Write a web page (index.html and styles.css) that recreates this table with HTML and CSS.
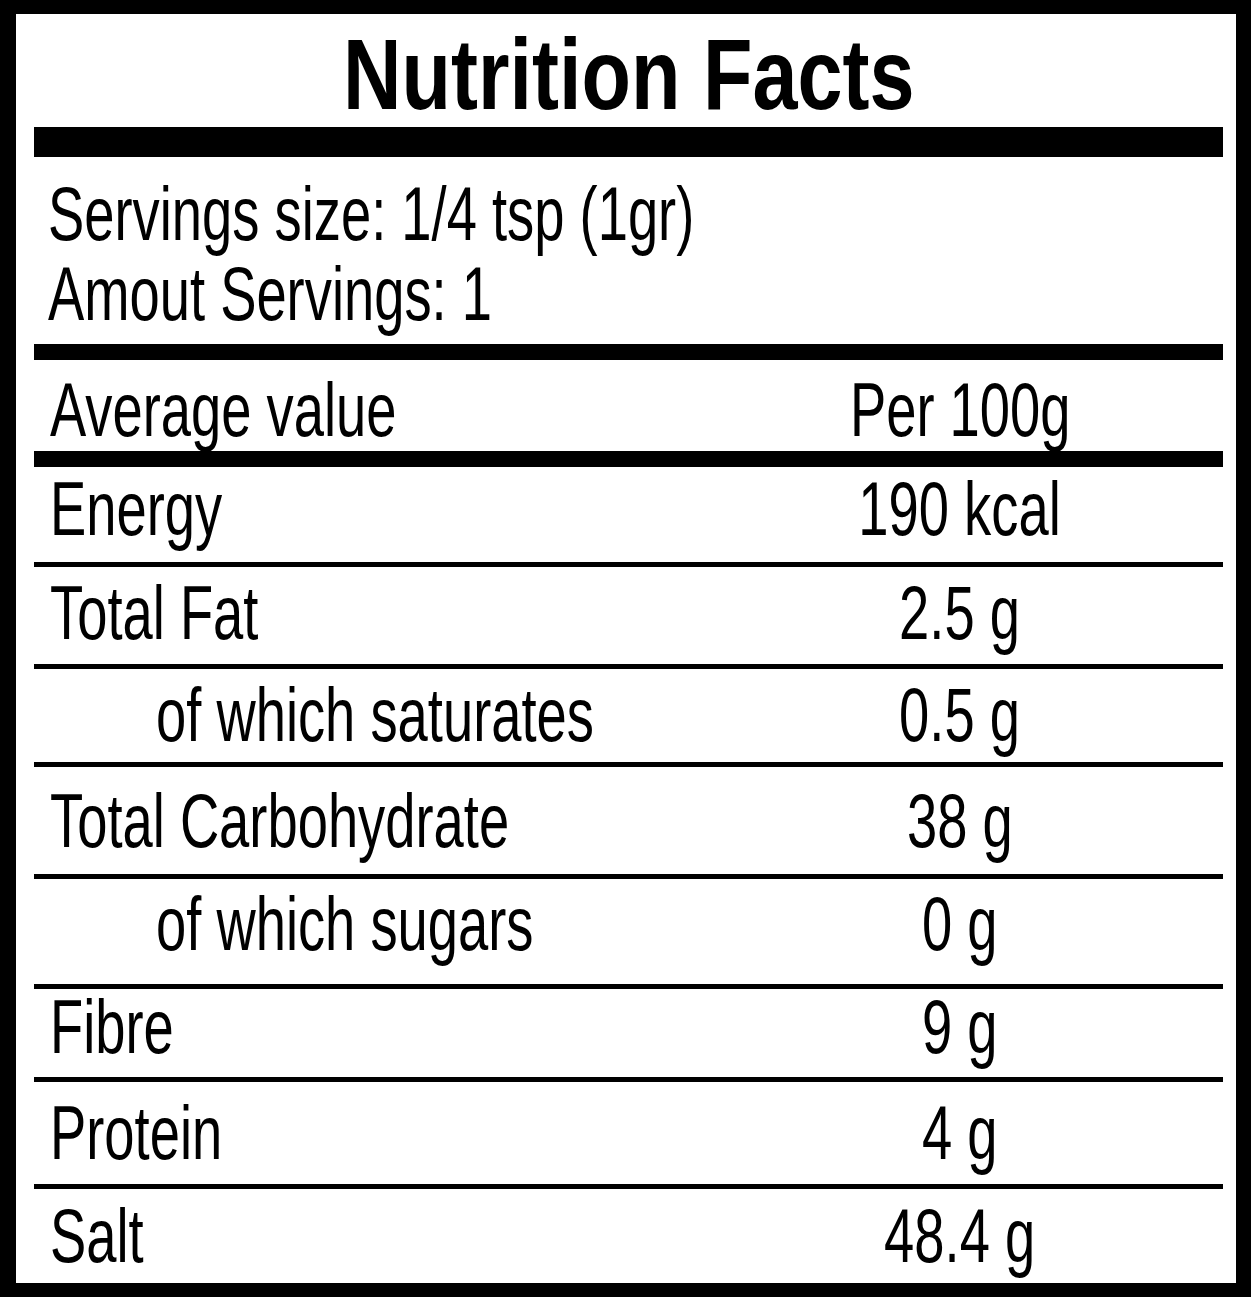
FILE: index.html
```html
<!DOCTYPE html>
<html lang="en">
<head>
<meta charset="utf-8">
<title>Nutrition Facts</title>
<link rel="stylesheet" href="styles.css">
</head>
<body>
<div class="label">
  <h1 class="title"><span class="t">Nutrition Facts</span></h1>
  <div class="bar bar-xl"></div>
  <div class="servings">
    <div><span class="t">Servings size: 1/4 tsp (1gr)</span></div>
    <div><span class="t">Amout Servings: 1</span></div>
  </div>
  <div class="bar bar-l"></div>
  <div class="row head">
    <div class="name"><span class="t">Average value</span></div>
    <div class="val"><span class="t">Per 100g</span></div>
  </div>
  <div class="bar bar-l"></div>
  <div class="rows">
    <div class="row"><div class="name"><span class="t">Energy</span></div><div class="val"><span class="t">190 kcal</span></div></div>
    <div class="row"><div class="name"><span class="t">Total Fat</span></div><div class="val"><span class="t">2.5 g</span></div></div>
    <div class="row"><div class="name sub"><span class="t">of which saturates</span></div><div class="val"><span class="t">0.5 g</span></div></div>
    <div class="row"><div class="name"><span class="t">Total Carbohydrate</span></div><div class="val"><span class="t">38 g</span></div></div>
    <div class="row"><div class="name sub"><span class="t">of which sugars</span></div><div class="val"><span class="t">0 g</span></div></div>
    <div class="row"><div class="name"><span class="t">Fibre</span></div><div class="val"><span class="t">9 g</span></div></div>
    <div class="row"><div class="name"><span class="t">Protein</span></div><div class="val"><span class="t">4 g</span></div></div>
    <div class="row"><div class="name"><span class="t">Salt</span></div><div class="val"><span class="t">48.4 g</span></div></div>
  </div>
</div>
</body>
</html>
```

FILE: styles.css
```css
html, body {
  margin: 0;
  padding: 0;
  background: #fff;
}

.label {
  width: 1251px;
  height: 1297px;
  box-sizing: border-box;
  border-style: solid;
  border-color: #000;
  border-width: 14px 15px 14px 16px;
  padding: 0 13px 0 18px;
  font-family: "Liberation Sans", Arial, sans-serif;
  color: #000;
  display: flex;
  flex-direction: column;
}

/* condensed look: Liberation Sans squeezed horizontally */
.t {
  display: inline-block;
  white-space: nowrap;
  transform: scaleX(0.715);
  transform-origin: 0 50%;
}
.val .t,
.title .t {
  transform-origin: 50% 50%;
}

.title {
  margin: 0;
  padding-top: 10px;
  height: 103px;
  font-size: 100px;
  line-height: 100px;
  font-weight: 700;
  text-align: center;
  white-space: nowrap;
}
.title .t {
  transform: scaleX(0.81);
}

.bar {
  background: #000;
  flex: none;
}
.bar-xl { height: 30px; }
.bar-l { height: 16px; }

.servings {
  height: 187px;
  box-sizing: border-box;
  padding: 17px 0 0 14px;
  font-size: 76px;
  line-height: 80px;
}

.row {
  display: grid;
  grid-template-columns: minmax(0, 1fr) 526px;
  box-sizing: border-box;
  font-size: 76px;
  line-height: 76px;
}

.name { padding-left: 16px; white-space: nowrap; min-width: 0; }
.name.sub { padding-left: 122px; }
.val { text-align: center; white-space: nowrap; }

.head {
  height: 91px;
  padding-top: 12px;
}

.rows .row { border-bottom: 5px solid #000; }
.rows .row:last-child { border-bottom: none; }

.rows .row:nth-child(1) { height: 99.5px; padding-top: 4px; }
.rows .row:nth-child(2) { height: 102.5px; padding-top: 8px; }
.rows .row:nth-child(3) { height: 97.5px; padding-top: 8px; }
.rows .row:nth-child(4) { height: 112px; padding-top: 16px; }
.rows .row:nth-child(5) { height: 110.5px; padding-top: 7px; }
.rows .row:nth-child(6) { height: 92.5px; padding-top: 0; }
.rows .row:nth-child(7) { height: 107px; padding-top: 13px; }
.rows .row:nth-child(8) { height: 94.5px; padding-top: 9px; }
```
